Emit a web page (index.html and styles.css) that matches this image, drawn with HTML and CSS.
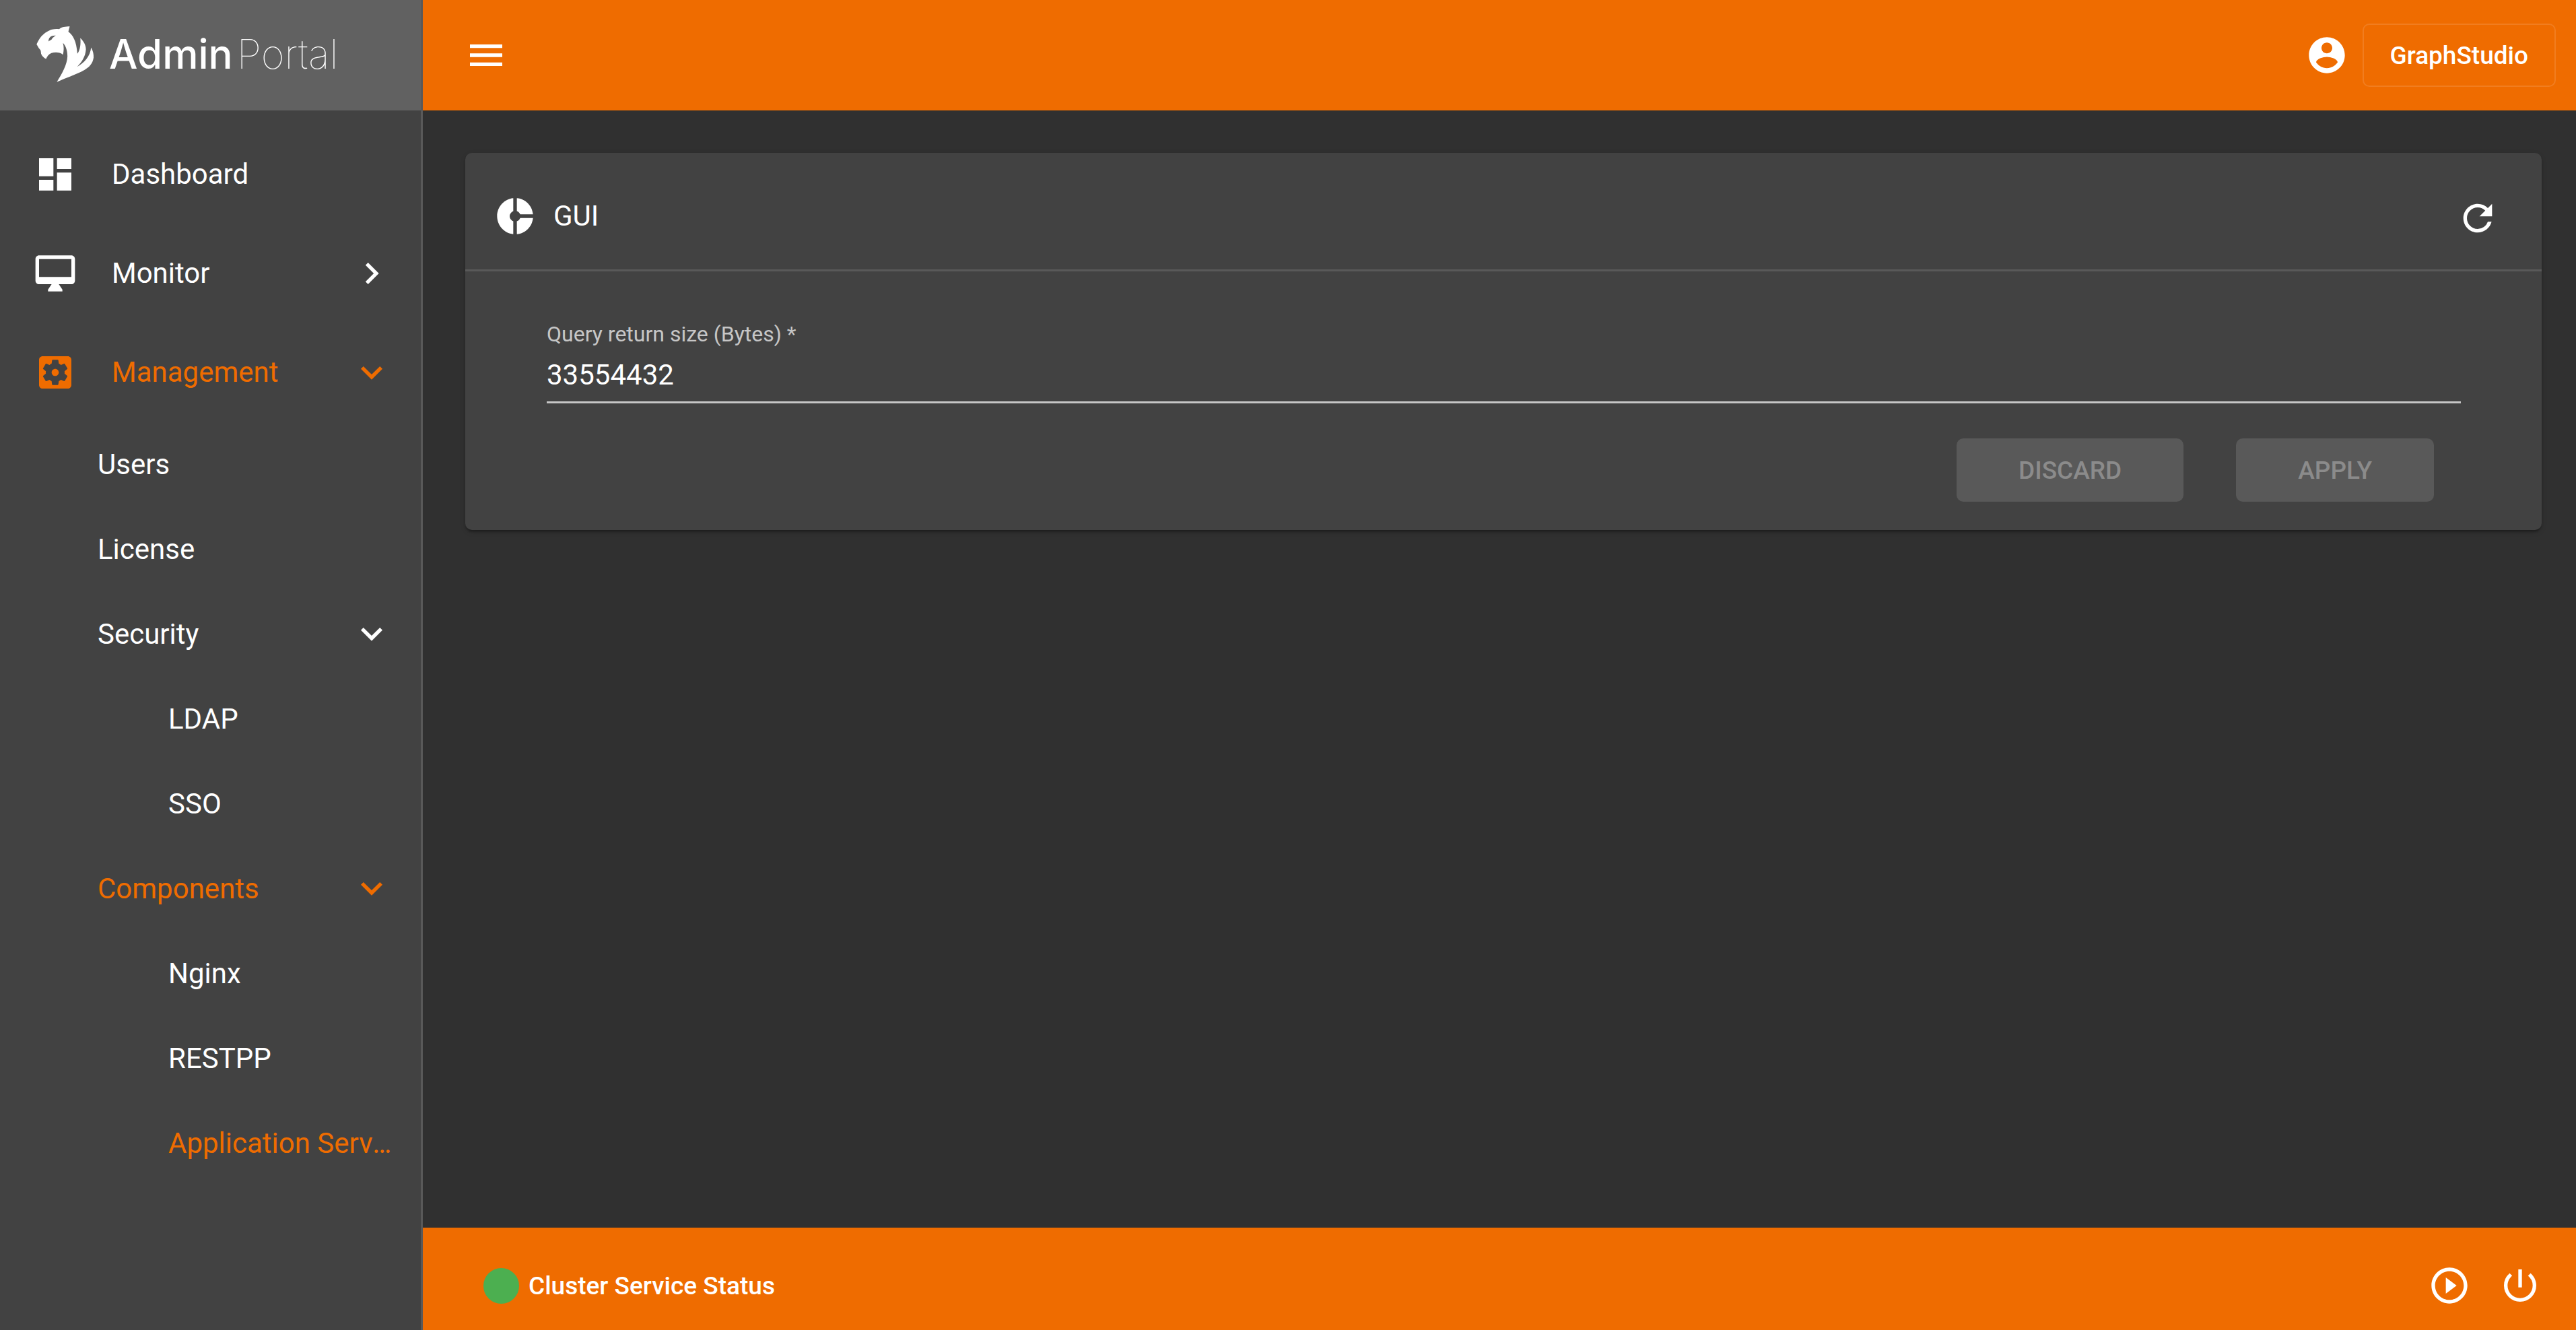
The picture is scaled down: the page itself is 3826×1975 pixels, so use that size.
FILE: index.html
```html
<!DOCTYPE html>
<html lang="en">
<head>
<meta charset="utf-8">
<title>AdminPortal</title>
<link rel="stylesheet" href="styles.css">
</head>
<body>
<div class="app">
  <aside class="sidebar">
    <a class="brand" href="#">
      <svg class="brand-mark" viewBox="42 56 257 248" aria-hidden="true">
        <path fill-rule="evenodd" d="M190 57L184 80C205 96 220 122 224 178C236 162 240 135 237 108C252 122 262 140 262 158C260 190 245 212 223 236C255 217 281 190 285 150C294 166 297 180 296 196C292 222 277 238 255 250C215 272 170 286 133 303C155 268 179 226 180 190C180 165 173 143 160 130C165 148 164 166 160 182C146 170 124 170 109 175C97 180 90 189 85 201C76 197 66 188 63 178C62 170 62 164 60 161L53 153L43 136C50 122 56 110 64 101C78 85 97 74 112 70C124 67 136 67 143 69C153 59 172 57 190 57ZM96 123C96 106 107 96 128 97C119 104 112 108 110 114C106 117 101 119 96 123Z"/>
      </svg>
      <span class="brand-name"><span class="brand-strong">Admin</span><span class="brand-thin">Portal</span></span>
    </a>
    <nav class="nav">
      <a class="nav-item" href="#">
        <svg class="icon" viewBox="0 0 24 24" aria-hidden="true"><path d="M3 13h8V3H3v10zm0 8h8v-6H3v6zm10 0h8V11h-8v10zm0-18v6h8V3h-8z"/></svg>
        <span class="nav-label">Dashboard</span>
      </a>
      <button class="nav-item" type="button" aria-expanded="false">
        <svg class="icon" viewBox="0 0 24 24" aria-hidden="true"><path d="M21 2H3c-1.100 0-2 .9-2 2v12c0 1.100.9 2 2 2h7l-2 3v1h8v-1l-2-3h7c1.100 0 2-.9 2-2V4c0-1.100-.9-2-2-2zm0 12H3V4h18v10z"/></svg>
        <span class="nav-label">Monitor</span>
        <svg class="icon" viewBox="0 0 24 24" aria-hidden="true"><path d="M10 6L8.590 7.410 13.170 12l-4.580 4.590L10 18l6-6z"/></svg>
      </button>
      <button class="nav-item active" type="button" aria-expanded="true">
        <svg class="icon" viewBox="0 0 24 24" aria-hidden="true"><path d="M12 10c-1.100 0-2 .9-2 2s.9 2 2 2 2-.9 2-2-.9-2-2-2zm7-7H5c-1.110 0-2 .9-2 2v14c0 1.100.89 2 2 2h14c1.110 0 2-.9 2-2V5c0-1.100-.89-2-2-2zm-1.750 9c0 .23-.02.46-.05.68l1.480 1.160c.13.11.17.3.08.45l-1.400 2.420c-.09.15-.27.21-.43.15l-1.740-.7c-.36.28-.76.51-1.180.69l-.26 1.850c-.03.17-.18.3-.35.3h-2.800c-.17 0-.32-.13-.35-.29l-.26-1.850c-.43-.18-.82-.41-1.180-.69l-1.740.7c-.16.06-.34 0-.43-.15l-1.400-2.420c-.09-.15-.05-.34.08-.45l1.480-1.160c-.03-.23-.05-.46-.05-.69 0-.23.02-.46.05-.68l-1.480-1.160c-.13-.11-.17-.3-.08-.45l1.400-2.420c.09-.15.27-.21.43-.15l1.740.7c.36-.28.76-.51 1.180-.69l.26-1.850c.03-.17.18-.3.35-.3h2.800c.17 0 .32.13.35.29l.26 1.850c.43.18.82.41 1.180.69l1.740-.7c.16-.06.34 0 .43.15l1.400 2.420c.09.15.05.34-.08.45l-1.480 1.160c.03.23.05.46.05.69z"/></svg>
        <span class="nav-label">Management</span>
        <svg class="icon" viewBox="0 0 24 24" aria-hidden="true"><path d="M16.590 8.590L12 13.170 7.410 8.590 6 10l6 6 6-6z"/></svg>
      </button>
      <a class="nav-item level-2" href="#"><span class="nav-label">Users</span></a>
      <a class="nav-item level-2" href="#"><span class="nav-label">License</span></a>
      <button class="nav-item level-2" type="button" aria-expanded="true">
        <span class="nav-label">Security</span>
        <svg class="icon" viewBox="0 0 24 24" aria-hidden="true"><path d="M16.590 8.590L12 13.170 7.410 8.590 6 10l6 6 6-6z"/></svg>
      </button>
      <a class="nav-item level-3" href="#"><span class="nav-label">LDAP</span></a>
      <a class="nav-item level-3" href="#"><span class="nav-label">SSO</span></a>
      <button class="nav-item level-2 active" type="button" aria-expanded="true">
        <span class="nav-label">Components</span>
        <svg class="icon" viewBox="0 0 24 24" aria-hidden="true"><path d="M16.590 8.590L12 13.170 7.410 8.590 6 10l6 6 6-6z"/></svg>
      </button>
      <a class="nav-item level-3" href="#"><span class="nav-label">Nginx</span></a>
      <a class="nav-item level-3" href="#"><span class="nav-label">RESTPP</span></a>
      <a class="nav-item level-3 active" href="#" aria-current="page"><span class="nav-label">Application Server</span></a>
    </nav>
  </aside>

  <div class="page">
    <header class="topbar">
      <button class="icon-button" type="button" aria-label="Toggle menu">
        <svg class="icon" viewBox="0 0 24 24" aria-hidden="true"><path d="M3 18h18v-2H3v2zm0-5h18v-2H3v2zm0-7v2h18V6H3z"/></svg>
      </button>
      <div class="topbar-actions">
        <button class="icon-button" type="button" aria-label="Account">
          <svg class="icon" viewBox="0 0 24 24" aria-hidden="true"><path d="M12 2C6.480 2 2 6.480 2 12s4.480 10 10 10 10-4.480 10-10S17.520 2 12 2zm0 3c1.660 0 3 1.340 3 3s-1.340 3-3 3-3-1.340-3-3 1.340-3 3-3zm0 14.200c-2.500 0-4.710-1.280-6-3.220.03-1.990 4-3.080 6-3.080 1.990 0 5.970 1.090 6 3.080-1.290 1.940-3.500 3.220-6 3.220z"/></svg>
        </button>
        <button class="outline-button" type="button">GraphStudio</button>
      </div>
    </header>

    <main class="content">
      <section class="card">
        <header class="card-header">
          <svg class="icon" viewBox="0 0 24 24" aria-hidden="true"><path d="M11 9.160V2c-5 .5-9 4.790-9 10s4 9.500 9 10v-7.160c-1-.41-2-1.520-2-2.840s1-2.430 2-2.840zM14.860 11H22c-.48-4.750-4-8.530-9-9v7.160c1 .3 1.520.98 1.860 1.840zM13 14.840V22c5-.47 8.520-4.250 9-9h-7.140c-.34.86-.86 1.540-1.860 1.840z"/></svg>
          <h1 class="card-title">GUI</h1>
          <button class="icon-button refresh" type="button" aria-label="Refresh">
            <svg class="icon" viewBox="0 0 24 24" aria-hidden="true"><path d="M17.650 6.350A7.958 7.958 0 0 0 12 4c-4.420 0-7.990 3.580-7.990 8s3.570 8 7.990 8c3.730 0 6.840-2.550 7.730-6h-2.080A5.990 5.990 0 0 1 12 18c-3.310 0-6-2.690-6-6s2.690-6 6-6c1.660 0 3.140.69 4.220 1.780L13 11h7V4l-2.350 2.350z"/></svg>
          </button>
        </header>
        <form class="card-body">
          <div class="field">
            <label class="field-label" for="return-size">Query return size (Bytes) *</label>
            <input class="field-input" id="return-size" type="text" inputmode="numeric" value="33554432" required>
          </div>
          <div class="card-actions">
            <button class="raised-button" type="button" disabled>DISCARD</button>
            <button class="raised-button" type="submit" disabled>APPLY</button>
          </div>
        </form>
      </section>
    </main>

    <footer class="statusbar">
      <span class="status-dot"></span>
      <span class="status-text">Cluster Service Status</span>
      <div class="statusbar-actions">
        <button class="icon-button" type="button" aria-label="Start services">
          <svg class="icon" viewBox="0 0 24 24" aria-hidden="true"><path d="M10 16.500l6-4.500-6-4.500v9zM12 2C6.480 2 2 6.480 2 12s4.480 10 10 10 10-4.480 10-10S17.520 2 12 2zm0 18c-4.410 0-8-3.590-8-8s3.590-8 8-8 8 3.590 8 8-3.590 8-8 8z"/></svg>
        </button>
        <button class="icon-button" type="button" aria-label="Stop services">
          <svg class="icon" viewBox="0 0 24 24" aria-hidden="true"><path d="M13 3h-2v10h2V3zm4.830 2.170l-1.420 1.420A6.920 6.920 0 0 1 19 12c0 3.870-3.130 7-7 7s-7-3.130-7-7c0-2.190 1.010-4.140 2.580-5.420L6.170 5.170A8.932 8.932 0 0 0 3 12a9 9 0 0 0 18 0c0-2.740-1.230-5.180-3.170-6.830z"/></svg>
        </button>
      </div>
    </footer>
  </div>
</div>
</body>
</html>
```
FILE: styles.css
```css
:root {
  --accent: #ef6c00;
  --surface: #424242;
  --background: #303030;
  --divider: #595959;
}

* {
  box-sizing: border-box;
}

body {
  margin: 0;
  background: var(--background);
  color: #fff;
  font-family: Roboto, "Liberation Sans", sans-serif;
  font-size: 42px;
}

button,
input {
  margin: 0;
  padding: 0;
  border: 0;
  background: none;
  color: inherit;
  font: inherit;
}

a {
  color: inherit;
  text-decoration: none;
}

.app {
  display: grid;
  grid-template-columns: 628px 1fr;
  min-height: 100vh;
}

.icon {
  display: block;
  flex: none;
  width: 64px;
  height: 64px;
  fill: currentColor;
}

.icon-button {
  display: flex;
  align-items: center;
}

/* Sidebar */

.sidebar {
  background: var(--surface);
  border-right: 3px solid var(--divider);
}

.brand {
  display: flex;
  align-items: center;
  gap: 22px;
  height: 164px;
  padding: 0 0 4px 54px;
  background: #616161;
}

.brand-mark {
  width: 86px;
  height: 83px;
  fill: #fff;
}

.brand-name {
  display: flex;
  align-items: baseline;
  gap: 6px;
  font-family: Inter, sans-serif;
  font-size: 60px;
}

.brand-strong {
  font-weight: 500;
}

.brand-thin {
  font-weight: 100;
}

.nav {
  display: flex;
  flex-direction: column;
  padding-top: 21px;
}

.nav-item {
  display: flex;
  align-items: center;
  gap: 52px;
  height: 147px;
  padding: 0 41px 0 50px;
  text-align: left;
}

.nav-item.level-2 {
  height: 126px;
  padding-left: 145px;
}

.nav-item.level-3 {
  height: 126px;
  padding-left: 250px;
}

.nav-item.active {
  color: var(--accent);
}

.nav-label {
  flex: 1;
  min-width: 0;
  overflow: hidden;
  text-overflow: ellipsis;
  white-space: nowrap;
}

/* Page */

.page {
  display: flex;
  flex-direction: column;
  min-width: 0;
}

.topbar {
  display: flex;
  align-items: center;
  justify-content: space-between;
  height: 164px;
  padding: 0 30px 0 62px;
  background: var(--accent);
}

.topbar-actions {
  display: flex;
  align-items: center;
  gap: 21px;
}

.outline-button {
  height: 94px;
  padding: 0 39px;
  border: 2px solid rgba(255, 255, 255, 0.12);
  border-radius: 10px;
  font-size: 37px;
  font-weight: 500;
}

.content {
  flex: 1;
  padding: 63px 51px 63px 63px;
}

.card {
  background: var(--surface);
  border-radius: 10px;
  box-shadow: 0 5px 3px -3px rgba(0, 0, 0, 0.2), 0 3px 3px rgba(0, 0, 0, 0.14), 0 3px 8px rgba(0, 0, 0, 0.12);
}

.card-header {
  display: flex;
  align-items: flex-start;
  gap: 25px;
  padding: 62px 63px 41px 42px;
  border-bottom: 3px solid var(--divider);
}

.card-title {
  flex: 1;
  margin: 0;
  font-size: 42px;
  font-weight: 400;
  line-height: 64px;
}

.refresh {
  height: 70px;
}

.card-body {
  padding: 74px 120px 42px 121px;
}

.field {
  display: flex;
  flex-direction: column;
  gap: 17px;
}

.field-label {
  color: #c6c6c6;
  font-size: 32px;
  line-height: 38px;
}

.field-input {
  width: 100%;
  height: 67px;
  padding-bottom: 16px;
  border-bottom: 3px solid #c6c6c6;
  border-radius: 0;
  outline: 0;
}

.card-actions {
  display: flex;
  justify-content: flex-end;
  gap: 78px;
  padding: 52px 40px 0 0;
}

.raised-button {
  height: 94px;
  padding: 0 92px;
  border-radius: 10px;
  background: #595959;
  color: #8b8b8b;
  font-size: 37px;
  font-weight: 500;
}

.statusbar {
  display: flex;
  align-items: center;
  gap: 14px;
  height: 152px;
  padding: 20px 51px 0 90px;
  background: var(--accent);
  font-size: 37px;
  font-weight: 500;
}

.status-dot {
  width: 53px;
  height: 53px;
  border-radius: 50%;
  background: #4caf50;
}

.statusbar-actions {
  display: flex;
  gap: 41px;
  margin-left: auto;
}
```
